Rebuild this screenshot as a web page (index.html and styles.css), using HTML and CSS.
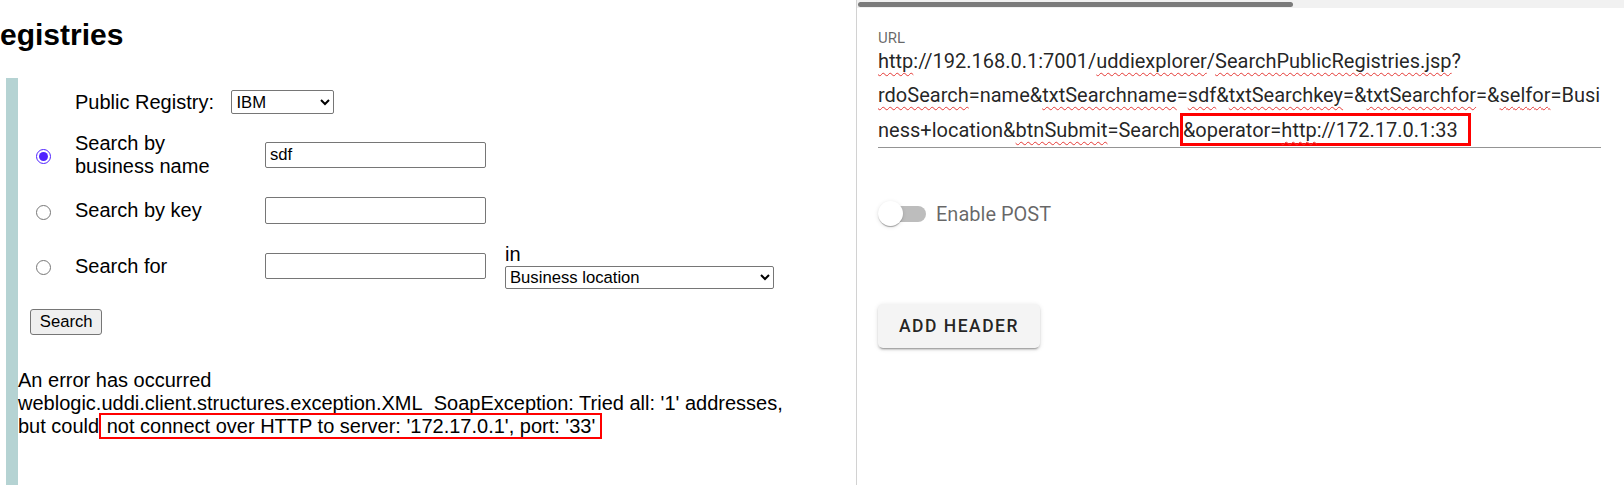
FILE: index.html
```html
<!DOCTYPE html>
<html>
<head>
<meta charset="utf-8">
<link rel="stylesheet" href="styles.css">
</head>
<body>
<div class="page">
  <div class="left">
    <h2 class="title">egistries</h2>
    <div class="panel">
      <form class="search-form">
        <div class="grid">
          <div class="registry">
            <span class="lbl">Public Registry:</span>
            <select class="sel sel-registry"><option>IBM</option></select>
          </div>

          <input class="radio" type="radio" name="rdo" checked>
          <span class="lbl">Search by<br>business name</span>
          <input class="txt" type="text" value="sdf">
          <span></span>

          <input class="radio" type="radio" name="rdo">
          <span class="lbl">Search by key</span>
          <input class="txt" type="text" value="">
          <span></span>

          <input class="radio" type="radio" name="rdo">
          <span class="lbl">Search for</span>
          <input class="txt" type="text" value="">
          <div class="in-col">
            <span class="lbl">in</span>
            <select class="sel sel-location"><option>Business location</option></select>
          </div>
        </div>
        <button class="btn-search" type="button">Search</button>
      </form>
      <div class="error">An error has occurred<br>weblogic.uddi.client.structures.exception.XML_SoapException: Tried all: '1' addresses,<br>but could<span class="redbox"> not connect over HTTP to server: '172.17.0.1', port: '33'</span></div>
    </div>
  </div>
  <div class="right">
    <div class="hscroll"><div class="hthumb"></div></div>
    <div class="right-body">
      <div class="url-label">URL</div>
      <div class="url-text"><span class="sp">http</span>://192.168.0.1:7001/<span class="sp">uddiexplorer</span>/<span class="sp">SearchPublicRegistries.jsp</span>?<br><span class="sp">rdoSearch</span>=name&amp;<span class="sp">txtSearchname</span>=<span class="sp">sdf</span>&amp;<span class="sp">txtSearchkey</span>=&amp;<span class="sp">txtSearchfor</span>=&amp;<span class="sp">selfor</span>=Busi<br>ness+location&amp;<span class="sp">btnSubmit</span>=Search<span class="hl">&amp;operator=<span class="sp">http</span>://172.17.0.1:33</span></div>
      <div class="switch-row">
        <span class="switch"><span class="track"></span><span class="thumb"></span></span>
        <span class="switch-label">Enable POST</span>
      </div>
      <button class="btn-add" type="button">ADD HEADER</button>
    </div>
  </div>
</div>
</body>
</html>
```
FILE: styles.css
```css
html, body {
  margin: 0;
  padding: 0;
  background: #fff;
}
.page {
  display: flex;
  width: 1624px;
  height: 485px;
  overflow: hidden;
}
.left {
  flex: none;
  width: 856px;
  border-right: 1px solid #d2d2d2;
  display: flex;
  flex-direction: column;
  font-family: "Liberation Sans", Arial, sans-serif;
  color: #000;
}
.title {
  margin: 0;
  padding-top: 18px;
  font-size: 30px;
  font-weight: bold;
  line-height: normal;
}
.panel {
  flex: 1;
  margin-top: 25.5px;
  margin-left: 6px;
  border-left: 12px solid #b5d3d3;
}
.search-form {
  margin: 0;
}
.grid {
  display: grid;
  grid-template-columns: 57px 190px 240px auto;
  grid-template-rows: 49px 57px 54px 57px;
  align-items: center;
}
.registry {
  grid-column: 2 / 5;
  display: flex;
  align-items: center;
  gap: 17.5px;
}
.lbl {
  font-size: 20px;
  line-height: normal;
}
.radio {
  width: 15px;
  height: 15px;
  margin: 3px 0 0 18px;
  accent-color: #4f22ff;
}
.txt {
  box-sizing: border-box;
  width: 221px;
  height: 26.5px;
  margin: 0;
  padding: 1px 4px;
  border: 1px solid #767676;
  border-radius: 2px;
  font-family: "Liberation Sans", Arial, sans-serif;
  font-size: 16.67px;
  color: #000;
}
.sel {
  box-sizing: border-box;
  margin: 0;
  border: 1px solid #767676;
  border-radius: 2px;
  background: #fff;
  font-family: "Liberation Sans", Arial, sans-serif;
  font-size: 16.67px;
  color: #000;
}
.sel-registry {
  width: 103px;
  height: 23.5px;
}
.in-col {
  display: flex;
  flex-direction: column;
  align-items: flex-start;
}
.sel-location {
  width: 269px;
  height: 22.5px;
}
.btn-search {
  box-sizing: border-box;
  display: block;
  width: 72.4px;
  height: 26.4px;
  margin: 14px 0 0 12px;
  padding: 0;
  border: 1px solid #767676;
  border-radius: 3px;
  background: #efefef;
  font-family: "Liberation Sans", Arial, sans-serif;
  font-size: 16.67px;
  color: #000;
}
.error {
  margin-top: 34.5px;
  font-size: 20px;
  line-height: 23px;
  white-space: nowrap;
}
.redbox {
  border: 2px solid #ff0000;
  padding: 0 5px 0 0;
}
.right {
  flex: 1;
  min-width: 0;
  font-family: Roboto, "Noto Sans", sans-serif;
}
.hscroll {
  height: 8px;
  background: #f1f1f1;
  padding-top: 1.5px;
  box-sizing: border-box;
}
.hthumb {
  width: 435px;
  height: 5.5px;
  margin-left: 1px;
  border-radius: 3px;
  background: #7b7b7b;
}
.right-body {
  padding: 0 23px 0 21px;
}
.url-label {
  margin-top: 24.7px;
  height: 11px;
  font-size: 15px;
  line-height: 11px;
  color: rgba(0, 0, 0, 0.6);
}
.url-text {
  font-size: 20px;
  line-height: 34.5px;
  color: rgba(0, 0, 0, 0.87);
  border-bottom: 1px solid #949494;
  white-space: nowrap;
}
.sp {
  text-decoration: underline wavy #e53935;
  text-decoration-thickness: 1px;
  text-underline-offset: 4px;
  text-decoration-skip-ink: none;
}
.hl {
  border: 3px solid #ff0000;
  padding: 2px 10px 1px 0;
}
.switch-row {
  display: flex;
  align-items: center;
  height: 47.5px;
  margin-top: 41.7px;
}
.switch {
  position: relative;
  width: 48.5px;
  height: 25px;
  margin-left: -0.5px;
}
.track {
  position: absolute;
  left: 7.5px;
  top: 4.5px;
  width: 41px;
  height: 16px;
  border-radius: 8px;
  background: #bdbdbd;
}
.thumb {
  position: absolute;
  left: 0;
  top: 0;
  width: 25px;
  height: 25px;
  border-radius: 50%;
  background: #fff;
  box-shadow: 0 2px 1px -1px rgba(0,0,0,0.2), 0 1px 1px 0 rgba(0,0,0,0.14), 0 1px 4px 0 rgba(0,0,0,0.12);
}
.switch-label {
  margin-left: 10px;
  font-size: 20px;
  color: rgba(0, 0, 0, 0.6);
}
.btn-add {
  display: block;
  box-sizing: border-box;
  width: 162px;
  height: 44.2px;
  margin-top: 66.8px;
  padding: 0;
  border: none;
  border-radius: 5px;
  background: #f4f4f4;
  box-shadow: 0 3px 1px -2px rgba(0,0,0,0.2), 0 2px 2px 0 rgba(0,0,0,0.14), 0 1px 5px 0 rgba(0,0,0,0.12);
  font-family: Roboto, "Noto Sans", sans-serif;
  font-weight: 500;
  font-size: 17.5px;
  letter-spacing: 1.5px;
  color: rgba(0, 0, 0, 0.87);
}
```
